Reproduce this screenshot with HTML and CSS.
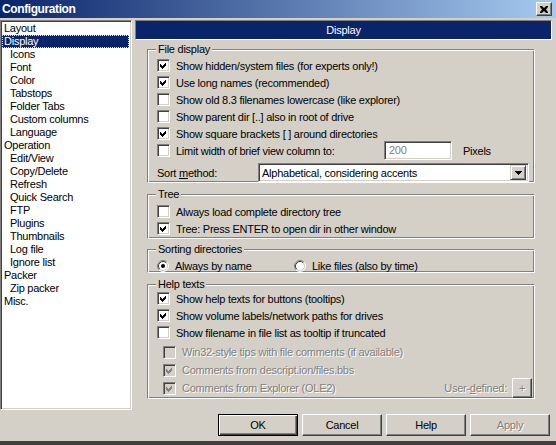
FILE: index.html
```html
<!DOCTYPE html>
<html>
<head>
<meta charset="utf-8">
<link rel="stylesheet" href="styles.css">
</head>
<body>
<div class="titlebar">
  <span class="title">Configuration</span>
  <span class="close"><svg width="8" height="7" viewBox="0 0 8 7"><path d="M0 0h2l2 2 2-2h2v1l-2 2.5 2 2.5v1h-2l-2-2-2 2h-2v-1l2-2.5-2-2.5z" fill="#000"/></svg></span>
</div>
<div class="main">
  <div class="tree">
    <div class="item">Layout</div>
    <div class="item sel"><span>Display</span></div>
    <div class="item sub">Icons</div>
    <div class="item sub">Font</div>
    <div class="item sub">Color</div>
    <div class="item sub">Tabstops</div>
    <div class="item sub">Folder Tabs</div>
    <div class="item sub">Custom columns</div>
    <div class="item sub">Language</div>
    <div class="item">Operation</div>
    <div class="item sub">Edit/View</div>
    <div class="item sub">Copy/Delete</div>
    <div class="item sub">Refresh</div>
    <div class="item sub">Quick Search</div>
    <div class="item sub">FTP</div>
    <div class="item sub">Plugins</div>
    <div class="item sub">Thumbnails</div>
    <div class="item sub">Log file</div>
    <div class="item sub">Ignore list</div>
    <div class="item">Packer</div>
    <div class="item sub">Zip packer</div>
    <div class="item">Misc.</div>
  </div>
  <div class="panel">
    <div class="header">Display</div>

    <div class="group g-file">
      <div class="legend">File display</div>
      <div class="row"><span class="cb"><svg width="11" height="11" viewBox="0 0 11 11" shape-rendering="crispEdges"><path d="M2 4L4 6L8 2L8 5L4 9L2 7Z" fill="#000"/></svg></span><span>Show hidden/system files (for experts only!)</span></div>
      <div class="row"><span class="cb"><svg width="11" height="11" viewBox="0 0 11 11" shape-rendering="crispEdges"><path d="M2 4L4 6L8 2L8 5L4 9L2 7Z" fill="#000"/></svg></span><span>Use long names (recommended)</span></div>
      <div class="row"><span class="cb"></span><span>Show old 8.3 filenames lowercase (like explorer)</span></div>
      <div class="row"><span class="cb"></span><span>Show parent dir [..] also in root of drive</span></div>
      <div class="row"><span class="cb"><svg width="11" height="11" viewBox="0 0 11 11" shape-rendering="crispEdges"><path d="M2 4L4 6L8 2L8 5L4 9L2 7Z" fill="#000"/></svg></span><span>Show square brackets [ ] around directories</span></div>
      <div class="row">
        <span class="limit-label"><span class="cb"></span><span>Limit width of brief view column to:</span></span>
        <span class="edit">200</span>
        <span>Pixels</span>
      </div>
      <div class="sort-row">
        <span class="sort-label">Sort <u>m</u>ethod:</span>
        <span class="combo"><span class="combo-text">Alphabetical, considering accents</span><span class="drop"><svg width="7" height="4" viewBox="0 0 7 4" shape-rendering="crispEdges"><path d="M0 0h7L3.5 4z" fill="#000"/></svg></span></span>
      </div>
    </div>

    <div class="group g-tree">
      <div class="legend">Tree</div>
      <div class="row"><span class="cb"></span><span>Always load complete directory tree</span></div>
      <div class="row"><span class="cb"><svg width="11" height="11" viewBox="0 0 11 11" shape-rendering="crispEdges"><path d="M2 4L4 6L8 2L8 5L4 9L2 7Z" fill="#000"/></svg></span><span>Tree: Press ENTER to open dir in other window</span></div>
    </div>

    <div class="group g-sort">
      <div class="legend">Sorting directories</div>
      <div class="row">
        <span class="radio-opt first"><svg class="radio" width="12" height="12" viewBox="0 0 12 12"><circle cx="6" cy="6" r="4.5" fill="#fff"/><path d="M2.11 9.89A5.5 5.5 0 0 1 9.89 2.11" stroke="#808080" fill="none"/><path d="M9.89 2.11A5.5 5.5 0 0 1 2.11 9.89" stroke="#fff" fill="none"/><path d="M2.82 9.18A4.5 4.5 0 0 1 9.18 2.82" stroke="#404040" fill="none"/><path d="M9.18 2.82A4.5 4.5 0 0 1 2.82 9.18" stroke="#d4d0c8" fill="none"/><circle cx="6" cy="6" r="2" fill="#000"/></svg><span>Always by name</span></span>
        <span class="radio-opt"><svg class="radio" width="12" height="12" viewBox="0 0 12 12"><circle cx="6" cy="6" r="4.5" fill="#fff"/><path d="M2.11 9.89A5.5 5.5 0 0 1 9.89 2.11" stroke="#808080" fill="none"/><path d="M9.89 2.11A5.5 5.5 0 0 1 2.11 9.89" stroke="#fff" fill="none"/><path d="M2.82 9.18A4.5 4.5 0 0 1 9.18 2.82" stroke="#404040" fill="none"/><path d="M9.18 2.82A4.5 4.5 0 0 1 2.82 9.18" stroke="#d4d0c8" fill="none"/></svg><span>Like files (also by time)</span></span>
      </div>
    </div>

    <div class="group g-help">
      <div class="legend">Help texts</div>
      <div class="row"><span class="cb"><svg width="11" height="11" viewBox="0 0 11 11" shape-rendering="crispEdges"><path d="M2 4L4 6L8 2L8 5L4 9L2 7Z" fill="#000"/></svg></span><span>Show help texts for buttons (tooltips)</span></div>
      <div class="row"><span class="cb"><svg width="11" height="11" viewBox="0 0 11 11" shape-rendering="crispEdges"><path d="M2 4L4 6L8 2L8 5L4 9L2 7Z" fill="#000"/></svg></span><span>Show volume labels/network paths for drives</span></div>
      <div class="row"><span class="cb"></span><span>Show filename in file list as tooltip if truncated</span></div>
      <div class="row dis first-dis"><span class="cb off"></span><span class="distext">Win32-style tips with file comments (if available)</span></div>
      <div class="row dis"><span class="cb off"><svg width="11" height="11" viewBox="0 0 11 11" shape-rendering="crispEdges"><path d="M2 4L4 6L8 2L8 5L4 9L2 7Z" fill="#808080"/></svg></span><span class="distext">Comments from descript.ion/files.bbs</span></div>
      <div class="row dis last">
        <span class="cb off"><svg width="11" height="11" viewBox="0 0 11 11" shape-rendering="crispEdges"><path d="M2 4L4 6L8 2L8 5L4 9L2 7Z" fill="#808080"/></svg></span><span class="distext">Comments from Explorer (OLE2)</span>
        <span class="userdef"><span class="distext">User-<u>d</u>efined:</span><span class="plus distext">+</span></span>
      </div>
    </div>
  </div>
</div>
<div class="buttons">
  <div class="btn default">OK</div>
  <div class="btn">Cancel</div>
  <div class="btn">Help</div>
  <div class="btn"><span class="distext">Apply</span></div>
</div>
<div class="bottom-strip"></div>
</body>
</html>
```

FILE: styles.css
```css
* { box-sizing: border-box; }
html, body { margin: 0; padding: 0; }
body {
  width: 556px;
  height: 445px;
  overflow: hidden;
  background: #d4d0c8;
  font-family: "Liberation Sans", Arial, sans-serif;
  font-size: 11px;
  letter-spacing: -0.25px;
  color: #000;
}
.titlebar {
  height: 18px;
  background: linear-gradient(to right, #0a246a, #a6caf0);
  display: flex;
  align-items: center;
  justify-content: space-between;
  padding: 0 4px 0 2px;
}
.title { color: #fff; font-weight: bold; font-size: 12px; letter-spacing: -0.4px; }
.close {
  width: 16px;
  height: 14px;
  background: #d4d0c8;
  border: 1px solid;
  border-color: #fff #404040 #404040 #fff;
  box-shadow: inset -1px -1px #808080;
  display: flex;
  align-items: center;
  justify-content: center;
}
.main {
  display: flex;
  margin-top: 2px;
  height: 390px;
}
.tree {
  width: 132px;
  height: 390px;
  background: #fff;
  border: 1px solid;
  border-color: #808080 #fff #fff #808080;
  box-shadow: inset 1px 1px #404040, inset -1px -1px #d4d0c8;
  padding: 1px;
}
.item {
  height: 13px;
  line-height: 13px;
  padding-left: 2px;
  white-space: nowrap;
}
.item.sub { padding-left: 8px; }
.item.sel {
  background: #0a246a;
  color: #fff;
  outline: 1px dotted #e8e8b0;
  outline-offset: -1px;
  margin: 0 1px 0 0;
}
.panel {
  margin-left: 3px;
  width: 417px;
}
.header {
  height: 20px;
  background: #0a246a;
  border: 1px solid;
  border-color: #808080 #fff #fff #808080;
  color: #fff;
  text-align: center;
  line-height: 18px;
}
.group {
  position: relative;
  margin-left: 12px;
  width: 388px;
  border: 1px solid;
  border-color: #808080 #fff #fff #808080;
  box-shadow: inset 1px 1px #fff, inset -1px -1px #808080;
}
.legend {
  position: absolute;
  top: -7px;
  left: 8px;
  background: #d4d0c8;
  padding: 0 2px;
  line-height: 13px;
}
.g-file { margin-top: 9px; height: 134px; padding-top: 7px; }
.g-tree { margin-top: 11px; height: 45px; padding-top: 8px; }
.g-sort { margin-top: 10px; height: 24px; padding-top: 7px; }
.g-help { margin-top: 11px; height: 115px; padding-top: 5px; }
.row {
  display: flex;
  align-items: center;
  height: 17px;
  padding-left: 9px;
  gap: 6px;
  white-space: nowrap;
}
.row.dis { padding-left: 15px; height: 18px; }
.row.first-dis { margin-top: 2px; }
.cb {
  width: 13px;
  height: 13px;
  flex: none;
  background: #fff;
  border: 1px solid;
  border-color: #808080 #fff #fff #808080;
  box-shadow: inset 1px 1px #404040, inset -1px -1px #d4d0c8;
}
.cb svg { display: block; }
.cb.off { background: #d4d0c8; }
.distext { color: #808080; text-shadow: 1px 1px 0 #fff; }
.limit-label {
  display: flex;
  align-items: center;
  gap: 6px;
  width: 221px;
}
.edit {
  width: 68px;
  height: 19px;
  flex: none;
  background: #fff;
  border: 1px solid;
  border-color: #808080 #fff #fff #808080;
  box-shadow: inset 1px 1px #404040, inset -1px -1px #d4d0c8;
  color: #808080;
  padding-left: 4px;
  line-height: 17px;
  margin-right: 5px;
}
.sort-row {
  display: flex;
  align-items: center;
  margin-top: 4px;
  padding-left: 9px;
  height: 19px;
}
.sort-label { width: 101px; flex: none; }
.combo {
  width: 271px;
  height: 19px;
  display: flex;
  align-items: center;
  background: #fff;
  border: 1px solid;
  border-color: #808080 #fff #fff #808080;
  box-shadow: inset 1px 1px #404040, inset -1px -1px #d4d0c8;
  padding: 2px 2px 2px 3px;
}
.combo-text { flex: 1; white-space: nowrap; }
.drop {
  width: 16px;
  height: 15px;
  background: #d4d0c8;
  border: 1px solid;
  border-color: #d4d0c8 #404040 #404040 #d4d0c8;
  box-shadow: inset 1px 1px #fff, inset -1px -1px #808080;
  display: flex;
  align-items: center;
  justify-content: center;
}
.drop svg { display: block; }
.radio-opt { display: flex; align-items: center; gap: 6px; }
.radio-opt.first { width: 131px; }
.radio { display: block; flex: none; }
.row.last { position: relative; }
.userdef {
  margin-left: auto;
  margin-right: 2px;
  display: flex;
  align-items: center;
  gap: 5px;
}
.plus {
  width: 20px;
  height: 20px;
  border: 1px solid;
  border-color: #fff #404040 #404040 #fff;
  box-shadow: inset -1px -1px #808080;
  display: flex;
  align-items: center;
  justify-content: center;
}
.buttons {
  display: flex;
  justify-content: flex-end;
  gap: 4px;
  padding-right: 6px;
  margin-top: 4px;
}
.btn {
  width: 80px;
  height: 22px;
  border: 1px solid;
  border-color: #fff #404040 #404040 #fff;
  box-shadow: inset -1px -1px #808080;
  display: flex;
  align-items: center;
  justify-content: center;
}
.btn.default {
  border-color: #000;
  box-shadow: inset 1px 1px #fff, inset -1px -1px #404040, inset -2px -2px #808080;
}
.bottom-strip {
  margin-top: 5px;
  height: 4px;
  background: #404040;
}
```
